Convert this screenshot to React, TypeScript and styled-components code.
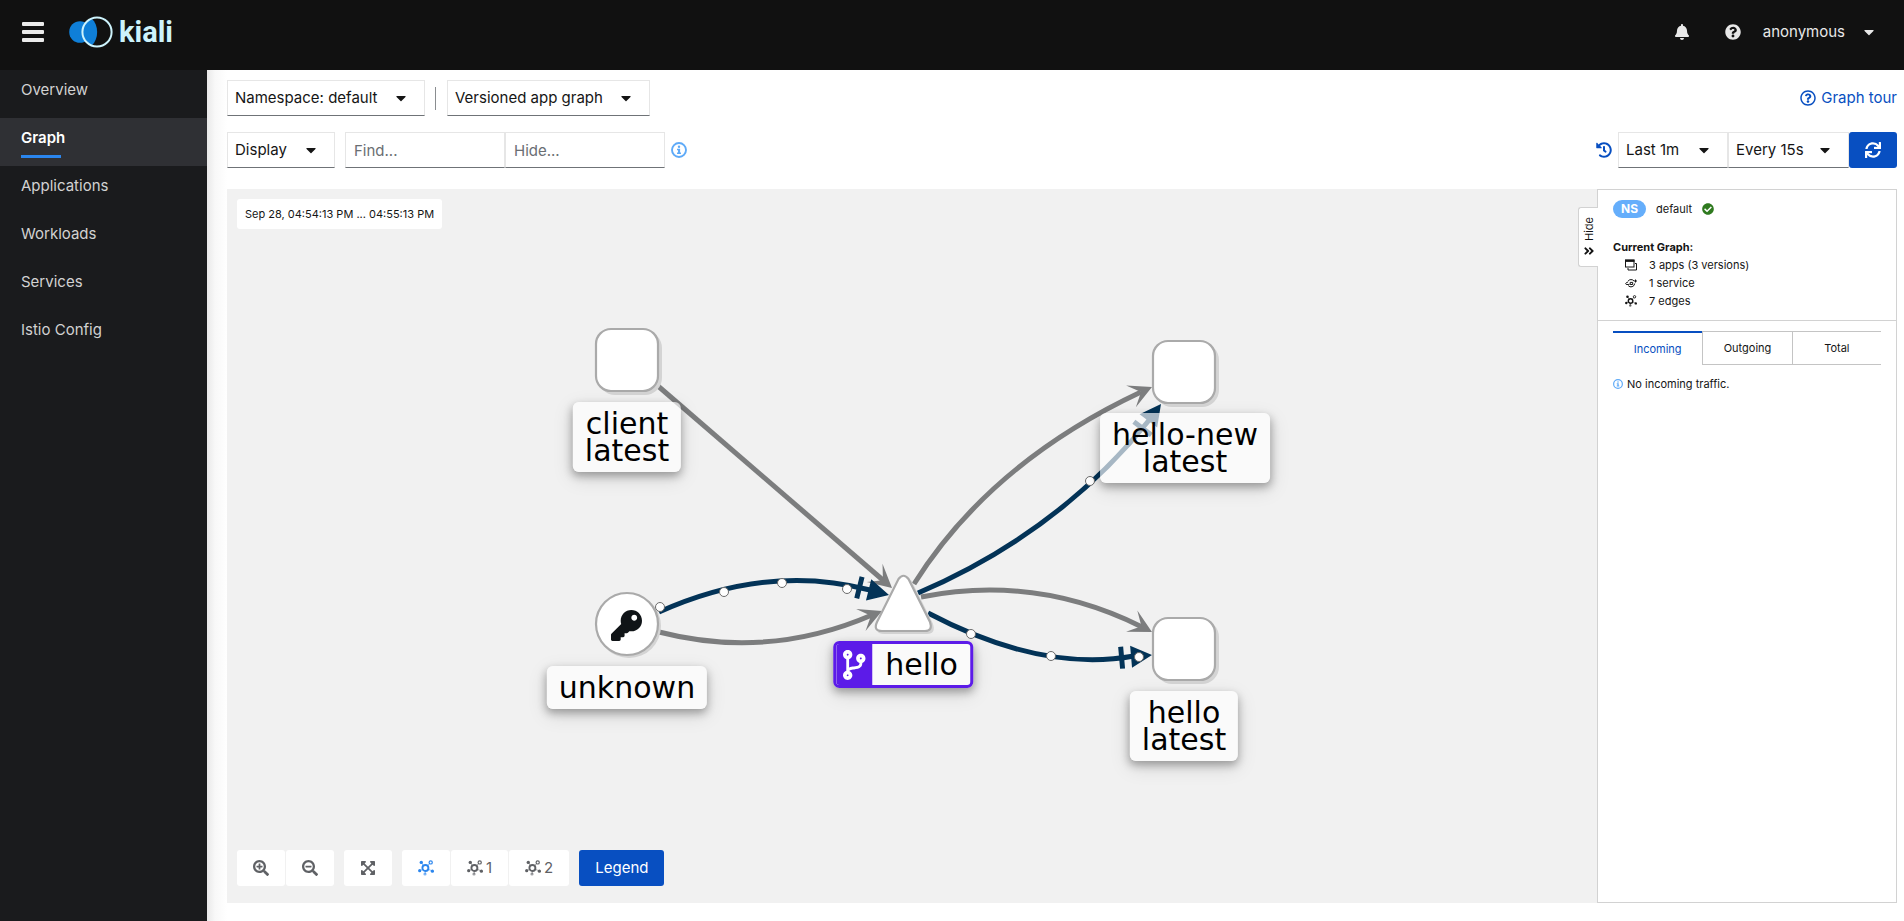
import React from 'react';
import styled, { createGlobalStyle, css } from 'styled-components';
import {
  FaAngleDoubleRight,
  FaBell,
  FaCaretDown,
  FaCheckCircle,
  FaCodeBranch,
  FaExpandArrowsAlt,
  FaHistory,
  FaKey,
  FaQuestionCircle,
  FaRegQuestionCircle,
  FaSearchMinus,
  FaSearchPlus,
  FaSync,
} from 'react-icons/fa';

const blue = '#084fc1';
const grey = '#7c7d7e';
const navy = '#033357';
const line = '#d2d2d2';

const GlobalStyle = createGlobalStyle`
  *, *::before, *::after { box-sizing: border-box; }
  body {
    margin: 0;
    background: #fff;
    color: #151515;
    font-family: Inter, 'Open Sans', sans-serif;
    font-size: 15px;
    line-height: 24px;
  }
  button, input, select { font: inherit; color: inherit; margin: 0; }
  button { cursor: pointer; }
  svg { display: block; flex: none; }
`;

/* ---------- page frame ---------- */

const Page = styled.div`
  display: flex;
  flex-direction: column;
  min-height: 100vh;
`;

const Masthead = styled.header`
  display: flex;
  align-items: center;
  height: 70px;
  padding: 0 27px 6px 22px;
  background: #111;
  color: #e8e8e8;
`;

const PlainButton = styled.button`
  display: flex;
  align-items: center;
  padding: 0;
  border: 0;
  background: none;
`;

const Brand = styled.a`
  display: flex;
  align-items: center;
  gap: 6px;
  margin-left: 24px;
  color: #cdf3fc;
  font: 700 29px/36px Roboto, sans-serif;
  text-decoration: none;
`;

const MastheadTools = styled.div`
  display: flex;
  align-items: center;
  margin-left: auto;
`;

const BellButton = styled(PlainButton)`
  margin-right: 35px;
`;

const HelpButton = styled(PlainButton)`
  margin-right: 22px;
`;

const UserButton = styled(PlainButton)`
  gap: 16px;
`;

const Body = styled.div`
  display: flex;
  flex: 1;
`;

const Sidebar = styled.nav`
  flex: none;
  width: 207px;
  background: #1a1b1d;
`;

const NavList = styled.ul`
  margin: 0;
  padding: 0;
  list-style: none;
`;

const NavLink = styled.a<{ $active?: boolean }>`
  display: block;
  height: 48px;
  padding: 8px 21px 0;
  color: #d2d2d2;
  text-decoration: none;
  ${(p) =>
    p.$active &&
    css`
      background: #2f3034;
      color: #fff;
      font-weight: 600;
      &::after {
        content: '';
        display: block;
        width: 40px;
        height: 3px;
        margin-top: 5px;
        background: #2b86ee;
      }
    `}
`;

const Main = styled.main`
  display: flex;
  flex: 1;
  flex-direction: column;
  min-width: 0;
  padding: 10px 7px 18px 20px;
  background: linear-gradient(to right, #e9e9e9, #f8f8f8 8px, #fff 20px);
`;

/* ---------- toolbars ---------- */

const Toolbar = styled.div`
  display: flex;
  align-items: center;
  height: 36px;
  margin-bottom: 16px;
`;

const FilterBar = styled(Toolbar)`
  margin-bottom: 21px;
`;

const ToolbarEnd = styled.div`
  display: flex;
  align-items: center;
  margin-left: auto;
`;

const field = css`
  height: 36px;
  border: 1px solid #e6e6e6;
  border-bottom-color: #6f7377;
  border-radius: 0;
  background: #fff;
`;

const MenuToggle = styled.button<{ $width: number }>`
  ${field}
  display: flex;
  align-items: center;
  justify-content: space-between;
  width: ${(p) => p.$width}px;
  padding: 0 15px 0 7px;
`;

const SelectBox = styled.div<{ $width: number }>`
  position: relative;
  width: ${(p) => p.$width}px;
  & > svg {
    position: absolute;
    top: 10px;
    right: 16px;
    pointer-events: none;
  }
`;

const SelectField = styled.select`
  ${field}
  display: block;
  width: 100%;
  padding: 0 7px;
  appearance: none;
`;

const Divider = styled.span`
  width: 1px;
  height: 23px;
  margin: 0 11px 0 10px;
  background: #8a8d90;
`;

const FindGroup = styled.div`
  display: flex;
  margin: 0 6px 0 10px;
`;

const FindInput = styled.input`
  ${field}
  width: 160px;
  padding: 0 8px;
  &::placeholder { color: #6a6e73; opacity: 1; }
`;

const TourLink = styled.a`
  display: flex;
  align-items: center;
  gap: 5px;
  margin-left: auto;
  color: ${blue};
  text-decoration: none;
`;

const ReplayButton = styled(PlainButton)`
  margin-right: 6px;
  color: ${blue};
`;

const PrimaryButton = styled.button`
  display: flex;
  align-items: center;
  justify-content: center;
  height: 36px;
  padding: 0 16px;
  border: 0;
  border-radius: 3px;
  background: ${blue};
  color: #fff;
`;

/* ---------- graph canvas ---------- */

const Workspace = styled.div`
  display: flex;
  flex: 1;
  min-height: 600px;
`;

const Canvas = styled.section`
  position: relative;
  display: flex;
  flex: 1;
  flex-direction: column;
  align-items: flex-start;
  justify-content: space-between;
  min-width: 0;
  padding: 10px 10px 17px;
  overflow: hidden;
  background: #f1f1f1;
`;

const Drawing = styled.svg`
  position: absolute;
  top: 0;
  left: 0;
  overflow: visible;
`;

const NodeLabel = styled.div<{ $x: number; $y: number }>`
  position: absolute;
  left: ${(p) => p.$x}px;
  top: ${(p) => p.$y}px;
  padding: 8px 12px;
  border-radius: 6px;
  background: rgba(255, 255, 255, 0.65);
  box-shadow: 0 4px 8px rgba(0, 0, 0, 0.3), 0 6px 20px rgba(0, 0, 0, 0.13);
  color: #000;
  font: 30px/27px 'DejaVu Sans', sans-serif;
  text-align: center;
  transform: translateX(-50%);
  white-space: pre;
`;

const ServiceLabel = styled(NodeLabel)`
  display: flex;
  padding: 0;
  overflow: hidden;
  border: 3px solid #5c1be8;
`;

const ServiceBadge = styled.span`
  display: flex;
  align-items: center;
  justify-content: center;
  width: 36px;
  background: #5c1be8;
  color: #fff;
`;

const ServiceName = styled.span`
  padding: 7px 12px 7px 13px;
`;

const TimeRange = styled.div`
  position: relative;
  padding: 6px 8px;
  border-radius: 3px;
  background: #fff;
  font-size: 11px;
  line-height: 18px;
`;

const GraphTools = styled.div`
  position: relative;
  display: flex;
  gap: 10px;
`;

const ToolGroup = styled.div`
  display: flex;
  gap: 1px;
`;

const ToolButton = styled.button<{ $active?: boolean }>`
  display: flex;
  align-items: center;
  gap: 3px;
  height: 36px;
  padding: 0 16px;
  border: 0;
  border-radius: 3px;
  background: #fff;
  color: ${(p) => (p.$active ? '#2b86ee' : '#5f6165')};
`;

/* ---------- summary panel ---------- */

const Panel = styled.aside`
  position: relative;
  flex: none;
  width: 300px;
  border: 1px solid ${line};
  background: #fff;
  font-size: 11px;
  line-height: 18px;
`;

const HideTab = styled.button`
  position: absolute;
  top: 17px;
  left: -20px;
  display: flex;
  flex-direction: column;
  align-items: center;
  justify-content: center;
  gap: 4px;
  width: 20px;
  height: 60px;
  padding: 0;
  border: 1px solid ${line};
  border-right: 0;
  border-radius: 3px 0 0 3px;
  background: #fff;
`;

const HideText = styled.span`
  writing-mode: vertical-rl;
  transform: rotate(180deg);
`;

const PanelHead = styled.div`
  padding: 10px 15px 10px;
  border-bottom: 1px solid ${line};
`;

const NamespaceRow = styled.div`
  display: flex;
  align-items: center;
  margin-bottom: 20px;
`;

const NamespaceBadge = styled.span`
  width: 33px;
  margin-right: 10px;
  border-radius: 9px;
  background: #65aefb;
  color: #fff;
  font-weight: 700;
  font-size: 12px;
  text-align: center;
`;

const HealthIcon = styled(FaCheckCircle)`
  margin-left: 10px;
  color: #2f7a1f;
`;

const PanelTitle = styled.h2`
  margin: 0;
  font-size: 11px;
  font-weight: 700;
`;

const StatRow = styled.div`
  display: flex;
  align-items: center;
  gap: 12px;
  padding-left: 12px;
`;

const TabBar = styled.div`
  display: grid;
  grid-template-columns: repeat(3, 1fr);
  margin: 10px 15px 10px;
`;

const Tab = styled.button<{ $active?: boolean }>`
  height: 34px;
  padding: 0;
  border: 0 solid #c4c4c4;
  border-width: 1px 0 1px 1px;
  background: none;
  text-align: center;
  ${(p) =>
    p.$active &&
    css`
      border-width: 2px 0 0;
      border-color: ${blue};
      color: ${blue};
    `}
`;

const Notice = styled.p`
  display: flex;
  align-items: center;
  gap: 4px;
  margin: 0;
  padding: 0 15px;
`;

/* ---------- icons ---------- */

const MenuBars = () => (
  <svg width="22" height="20" fill="#ebebeb" aria-hidden="true">
    <rect y="0" width="22" height="4" rx="1" />
    <rect y="8" width="22" height="4" rx="1" />
    <rect y="16" width="22" height="4" rx="1" />
  </svg>
);

const KialiMark = () => (
  <svg width="45" height="32" viewBox="0 0 45 32" aria-hidden="true">
    <circle cx="12" cy="16" r="10.8" fill="#0f7fd8" />
    <circle cx="29" cy="16" r="14.6" fill="#111" />
    <path d="M23.6 2.4A14.6 14.6 0 0 0 23.6 29.6C31 23 31 9 23.6 2.4Z" fill="#0f7fd8" />
    <circle cx="29" cy="16" r="14.6" fill="none" stroke="#cdf3fc" strokeWidth="2" />
  </svg>
);

const InfoIcon = ({ size }: { size: number }) => (
  <svg width={size} height={size} viewBox="0 0 16 16" fill="#5eaaf8" aria-hidden="true">
    <circle cx="8" cy="8" r="7" fill="none" stroke="#5eaaf8" strokeWidth="1.9" />
    <circle cx="8" cy="4.7" r="1.2" />
    <path d="M6 6.7h3.1v3.8H10V12H6v-1.5h1V8.2H6Z" />
  </svg>
);

const TopologyIcon = ({ size = 16 }: { size?: number }) => (
  <svg width={size} height={size} viewBox="0 0 16 16" fill="currentColor" stroke="currentColor" strokeWidth="0" aria-hidden="true">
    <path d="M3.3 2.5 5.5 5.8M12 3 9.3 6M1.8 10.6 4.8 9.4M14.4 11 10 9.2M7.2 11v3" strokeWidth="0.8" opacity="0.7" />
    <circle cx="7.4" cy="8" r="3" fill="none" strokeWidth="1.9" />
    <circle cx="3.3" cy="2.4" r="1.7" />
    <circle cx="12.7" cy="2.4" r="1.6" fill="none" strokeWidth="1.2" />
    <circle cx="1.7" cy="10.7" r="1.6" />
    <circle cx="14.4" cy="11.2" r="1.6" />
    <circle cx="7" cy="14" r="1.6" opacity="0.6" />
  </svg>
);

const ApplicationsIcon = () => (
  <svg width="12" height="12" viewBox="0 0 12 12" fill="none" stroke="currentColor" aria-hidden="true">
    <rect x="0.5" y="1" width="8.5" height="7" />
    <path d="M0 1.8h9.5" strokeWidth="2.2" />
    <path d="M10 4.5h1.5V11H3V9" />
  </svg>
);

const ServiceIcon = () => (
  <svg width="12" height="12" viewBox="0 0 12 12" fill="none" stroke="currentColor" strokeWidth="1" aria-hidden="true">
    <path d="M3 4.2A3.7 3.7 0 0 1 9 4M9.7 6.500A3.7 3.7 0 0 1 3.200 8.600" />
    <path d="M3 5C1.400 5.500.4 6.200.6 6.900c.2.7 2 .8 3.900.4" />
    <path d="M5.200 5.400h2.500v2.100H5.200ZM9 4h3M10.500 2.500v3" />
  </svg>
);

/* ---------- graph data ---------- */

// The viewport pan maps graph coordinates to the canvas origin.
const pan = { x: -227, y: -189 };

type Edge = { path: string; tip: [number, number]; angle: number; kind: 'tcp' | 'idle' };

const edges: Edge[] = [
  { path: 'M658 386L884 581', tip: [892, 588], angle: 41, kind: 'idle' },
  { path: 'M659 632Q768 660 872 615', tip: [882, 611], angle: -23, kind: 'idle' },
  { path: 'M914 584Q990 463 1141 392', tip: [1152, 387], angle: -24, kind: 'idle' },
  { path: 'M921 597Q1036 574 1142 627', tip: [1152, 632], angle: 28, kind: 'idle' },
  { path: 'M659 612Q768 563 870 590', tip: [889, 595], angle: 14, kind: 'tcp' },
  { path: 'M918 593Q1060 532 1150 419', tip: [1161, 404], angle: -53, kind: 'tcp' },
  { path: 'M928 613Q1042 673 1134 656', tip: [1152, 655], angle: -5, kind: 'tcp' },
];

const packets: [number, number][] = [
  [660, 607],
  [724, 592],
  [782, 583],
  [847, 589],
  [971, 634],
  [1051, 656],
  [1139, 657],
  [1090, 481],
];

const boxes: [number, number][] = [
  [627, 360],
  [1184, 372],
  [1184, 649],
];

const trianglePath = 'M898.5 579Q903.5 572.5 908.5 579L930 622Q933 631 925 631H882Q873 631 877 622Z';

const GraphEdge = ({ path, tip, angle, kind }: Edge) => {
  const color = kind === 'tcp' ? navy : grey;
  return (
    <g fill={color}>
      <path d={path} fill="none" stroke={color} strokeWidth="5" />
      <g transform={`translate(${tip[0]} ${tip[1]}) rotate(${angle})`}>
        {kind === 'tcp' ? (
          <path d="M0 0L-21 -11V11ZM-33 -11h5v22h-5Z" />
        ) : (
          <path d="M0 0L-23 -12L-12 0L-23 12Z" />
        )}
      </g>
    </g>
  );
};

const GraphDrawing = () => (
  <Drawing width="1370" height="714" role="img" aria-label="Service graph">
    <g transform={`translate(${pan.x} ${pan.y})`}>
      {edges.map((e) => (
        <GraphEdge key={e.path} {...e} />
      ))}
      {boxes.map(([x, y]) => (
        <g key={`${x}-${y}`}>
          <rect x={x - 29} y={y - 29} width="64" height="64" rx="17" fill="#d4d4d4" />
          <rect x={x - 31} y={y - 31} width="62" height="62" rx="15" fill="#fff" stroke="#aaa" strokeWidth="2.2" />
        </g>
      ))}
      <circle cx="629" cy="626" r="32" fill="#d4d4d4" />
      <circle cx="627" cy="624" r="31" fill="#fff" stroke="#aaa" strokeWidth="2.2" />
      <g transform="translate(611 610)">
        <FaKey size={31} color="#101417" />
      </g>
      <path d={trianglePath} fill="#d4d4d4" stroke="#d4d4d4" strokeWidth="2" transform="translate(2 2)" />
      <path d={trianglePath} fill="#fff" stroke="#aaa" strokeWidth="2.2" />
      {packets.map(([x, y]) => (
        <circle key={`${x}-${y}`} cx={x} cy={y} r="4.5" fill="#fff" stroke="#6b6b6b" strokeWidth="1" />
      ))}
    </g>
  </Drawing>
);

const labels = [
  { text: 'client\nlatest', x: 627, y: 402 },
  { text: 'unknown', x: 627, y: 666 },
  { text: 'hello-new\nlatest', x: 1185, y: 413 },
  { text: 'hello\nlatest', x: 1184, y: 691 },
];

const navItems = ['Overview', 'Graph', 'Applications', 'Workloads', 'Services', 'Istio Config'];

const Select = ({ label, value, width }: { label: string; value: string; width: number }) => (
  <SelectBox $width={width}>
    <SelectField aria-label={label} defaultValue={value}>
      <option>{value}</option>
    </SelectField>
    <FaCaretDown size={16} />
  </SelectBox>
);

export default function App() {
  return (
    <Page>
      <GlobalStyle />
      <Masthead>
        <PlainButton aria-label="Toggle navigation">
          <MenuBars />
        </PlainButton>
        <Brand href="#">
          <KialiMark />
          kiali
        </Brand>
        <MastheadTools>
          <BellButton aria-label="Notifications">
            <FaBell size={16} />
          </BellButton>
          <HelpButton aria-label="Help">
            <FaQuestionCircle size={16} />
          </HelpButton>
          <UserButton>
            anonymous
            <FaCaretDown size={16} />
          </UserButton>
        </MastheadTools>
      </Masthead>
      <Body>
        <Sidebar aria-label="Main">
          <NavList>
            {navItems.map((item) => (
              <li key={item}>
                <NavLink href="#" $active={item === 'Graph'}>
                  {item}
                </NavLink>
              </li>
            ))}
          </NavList>
        </Sidebar>
        <Main>
          <Toolbar>
            <MenuToggle $width={198}>
              Namespace: default
              <FaCaretDown size={16} />
            </MenuToggle>
            <Divider />
            <Select label="Graph type" value="Versioned app graph" width={203} />
            <TourLink href="#">
              <FaRegQuestionCircle size={16} />
              Graph tour
            </TourLink>
          </Toolbar>
          <FilterBar>
            <MenuToggle $width={108}>
              Display
              <FaCaretDown size={16} />
            </MenuToggle>
            <FindGroup>
              <FindInput placeholder="Find..." aria-label="Find" />
              <FindInput placeholder="Hide..." aria-label="Hide" />
            </FindGroup>
            <PlainButton aria-label="Find and hide help">
              <InfoIcon size={16} />
            </PlainButton>
            <ToolbarEnd>
              <ReplayButton aria-label="Replay">
                <FaHistory size={16} />
              </ReplayButton>
              <Select label="Duration" value="Last 1m" width={110} />
              <Select label="Refresh interval" value="Every 15s" width={121} />
              <PrimaryButton aria-label="Refresh">
                <FaSync size={16} />
              </PrimaryButton>
            </ToolbarEnd>
          </FilterBar>
          <Workspace>
            <Canvas>
              <GraphDrawing />
              {labels.map((l) => (
                <NodeLabel key={l.text} $x={l.x + pan.x} $y={l.y + pan.y}>
                  {l.text}
                </NodeLabel>
              ))}
              <ServiceLabel $x={903 + pan.x} $y={641 + pan.y}>
                <ServiceBadge>
                  <FaCodeBranch size={30} />
                </ServiceBadge>
                <ServiceName>hello</ServiceName>
              </ServiceLabel>
              <TimeRange>Sep 28, 04:54:13 PM ... 04:55:13 PM</TimeRange>
              <GraphTools>
                <ToolGroup>
                  <ToolButton aria-label="Zoom in">
                    <FaSearchPlus size={16} />
                  </ToolButton>
                  <ToolButton aria-label="Zoom out">
                    <FaSearchMinus size={16} />
                  </ToolButton>
                </ToolGroup>
                <ToolButton aria-label="Zoom to fit">
                  <FaExpandArrowsAlt size={16} />
                </ToolButton>
                <ToolGroup>
                  <ToolButton $active aria-label="Default layout">
                    <TopologyIcon />
                  </ToolButton>
                  <ToolButton>
                    <TopologyIcon />1
                  </ToolButton>
                  <ToolButton>
                    <TopologyIcon />2
                  </ToolButton>
                </ToolGroup>
                <PrimaryButton>Legend</PrimaryButton>
              </GraphTools>
            </Canvas>
            <Panel>
              <HideTab>
                <HideText>Hide</HideText>
                <FaAngleDoubleRight size={12} />
              </HideTab>
              <PanelHead>
                <NamespaceRow>
                  <NamespaceBadge>NS</NamespaceBadge>
                  default
                  <HealthIcon size={12} />
                </NamespaceRow>
                <PanelTitle>Current Graph:</PanelTitle>
                <StatRow>
                  <ApplicationsIcon />3 apps (3 versions)
                </StatRow>
                <StatRow>
                  <ServiceIcon />1 service
                </StatRow>
                <StatRow>
                  <TopologyIcon size={12} />7 edges
                </StatRow>
              </PanelHead>
              <TabBar role="tablist">
                <Tab role="tab" aria-selected="true" $active>
                  Incoming
                </Tab>
                <Tab role="tab">Outgoing</Tab>
                <Tab role="tab">Total</Tab>
              </TabBar>
              <Notice>
                <InfoIcon size={10} />
                No incoming traffic.
              </Notice>
            </Panel>
          </Workspace>
        </Main>
      </Body>
    </Page>
  );
}
